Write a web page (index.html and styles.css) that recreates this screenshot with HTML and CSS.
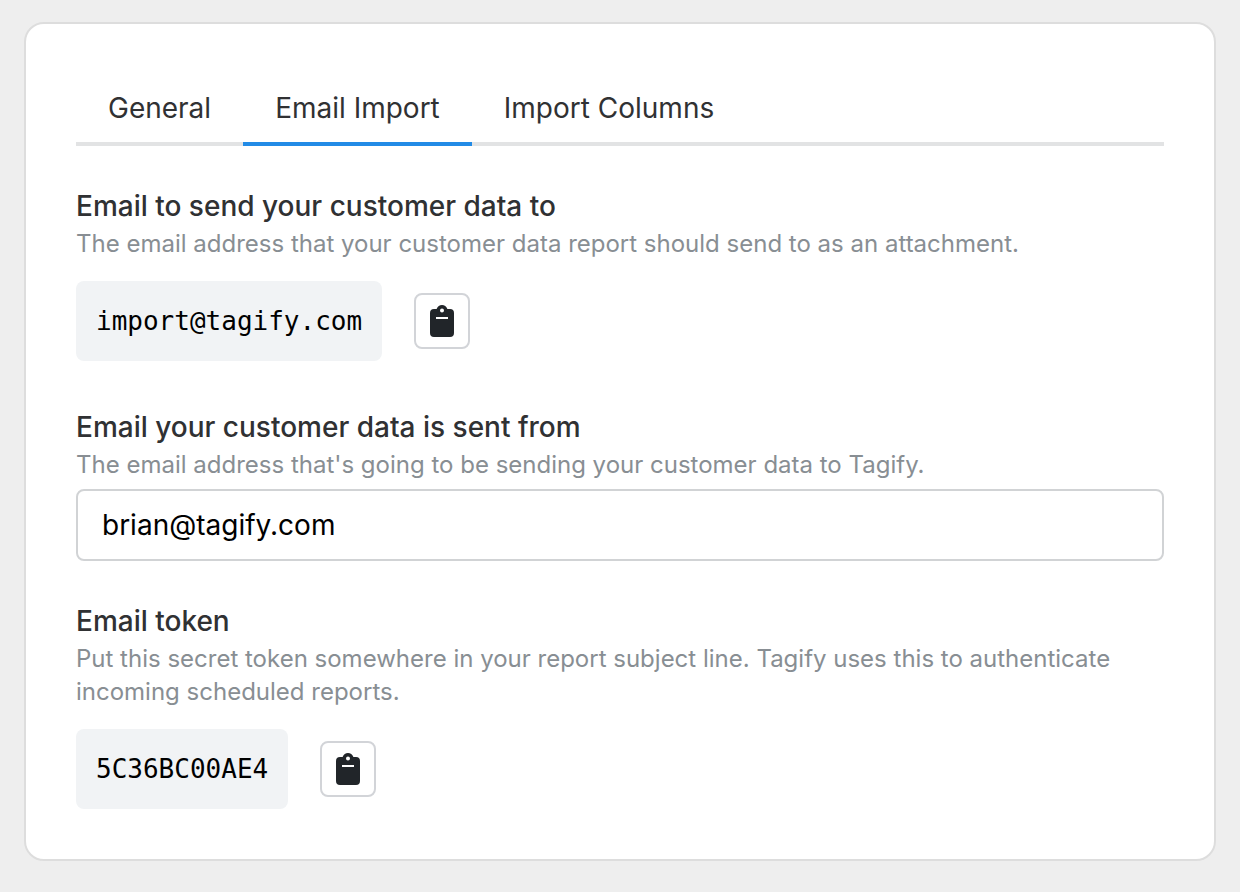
FILE: index.html
```html
<!DOCTYPE html>
<html lang="en">
<head>
<meta charset="utf-8">
<meta name="viewport" content="width=device-width, initial-scale=1">
<title>Email Import</title>
<link rel="stylesheet" href="styles.css">
</head>
<body>
<main class="card">
  <nav class="tabs">
    <button class="tab" type="button">General</button>
    <button class="tab tab-active" type="button" aria-current="page">Email Import</button>
    <button class="tab" type="button">Import Columns</button>
  </nav>
  <section class="field">
    <h2 class="label">Email to send your customer data to</h2>
    <p class="hint">The email address that your customer data report should send to as an attachment.</p>
    <div class="copy-row">
      <code class="code">import@tagify.com</code>
      <button class="copy" type="button" aria-label="Copy email">
        <svg class="icon" viewBox="0 0 32 36" aria-hidden="true"><path fill="#212529" fill-rule="evenodd" d="M8 6h2.600C11.600 3.600 13.600 2 16 2s4.400 1.600 5.400 4H24a4 4 0 0 1 4 4v20a4 4 0 0 1-4 4H8a4 4 0 0 1-4-4V10a4 4 0 0 1 4-4Zm8-.4a2 2 0 1 0 0 4 2 2 0 0 0 0-4ZM10 14v2h12v-2Z"/></svg>
      </button>
    </div>
  </section>
  <section class="field">
    <label class="label" for="sender">Email your customer data is sent from</label>
    <p class="hint" id="sender-hint">The email address that's going to be sending your customer data to Tagify.</p>
    <input class="input" id="sender" type="email" value="brian@tagify.com" aria-describedby="sender-hint">
  </section>
  <section class="field">
    <h2 class="label">Email token</h2>
    <p class="hint">Put this secret token somewhere in your report subject line. Tagify uses this to authenticate incoming scheduled reports.</p>
    <div class="copy-row">
      <code class="code">5C36BC00AE4</code>
      <button class="copy" type="button" aria-label="Copy token">
        <svg class="icon" viewBox="0 0 32 36" aria-hidden="true"><path fill="#212529" fill-rule="evenodd" d="M8 6h2.600C11.600 3.600 13.600 2 16 2s4.400 1.600 5.400 4H24a4 4 0 0 1 4 4v20a4 4 0 0 1-4 4H8a4 4 0 0 1-4-4V10a4 4 0 0 1 4-4Zm8-.4a2 2 0 1 0 0 4 2 2 0 0 0 0-4ZM10 14v2h12v-2Z"/></svg>
      </button>
    </div>
  </section>
</main>
</body>
</html>
```
FILE: styles.css
```css
* { box-sizing: border-box; }
body { margin: 0; padding: 22px 24px 30px; background: #eeeeee; font-family: Inter, sans-serif; color: #303133; }
.card { padding: 48px 50px 44px; background: #fff; border: 2px solid #dddddd; border-radius: 20px; }
.tabs { display: flex; border-bottom: 4px solid #e2e3e4; }
.tab { margin: 0 0 -4px; padding: 19px 32px 17px; border: 0; border-bottom: 4px solid transparent; background: none; font: 400 28px/34px Inter, sans-serif; color: #303133; }
.tab-active { border-bottom-color: #228be6; }
.field { margin-top: 42px; }
.label { display: block; margin: 0; font-size: 28px; line-height: 36px; font-weight: 500; }
.hint { margin: 3px 0 0; font-size: 24px; line-height: 33px; color: #888e93; }
.copy-row { display: flex; align-items: center; gap: 32px; padding: 21px 0 6px; }
.code { padding: 20px; border-radius: 8px; background: #f1f3f5; font: 26px/40px "DejaVu Sans Mono", monospace; color: #000; }
.copy { display: flex; align-items: center; justify-content: center; width: 56px; height: 56px; padding: 0; border: 2px solid #d2d4d8; border-radius: 8px; background: #fff; }
.icon { width: 32px; height: 36px; }
.input { display: block; width: 100%; height: 72px; margin-top: 8px; padding: 0 24px; border: 2px solid #d1d3d5; border-radius: 8px; background: #fff; font: 28px/40px Inter, sans-serif; color: #000; }
```
